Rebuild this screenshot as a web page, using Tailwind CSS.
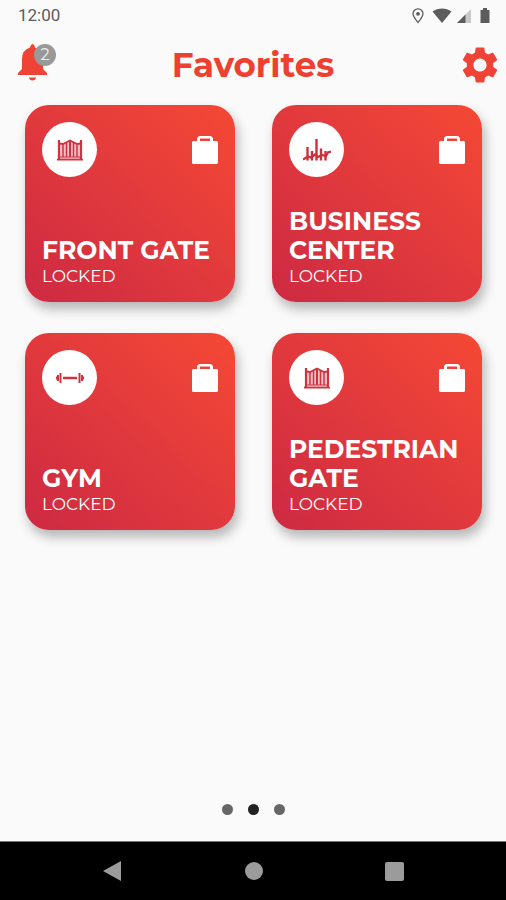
<!DOCTYPE html>
<html lang="en">

<head>
  <meta charset="UTF-8">
  <meta name="viewport" content="width=device-width, initial-scale=1.0">
  <title>Favorites</title>
  <script src="https://cdn.jsdelivr.net/npm/@tailwindcss/browser@4"></script>
</head>

<body class="min-h-screen flex flex-col bg-[#fafafa] font-[Montserrat,Inter,sans-serif]">

  <!-- Shared icons -->
  <svg class="hidden">
    <symbol id="icon-bag" viewBox="0 0 26 28">
      <path fill="currentColor" fill-rule="evenodd" d="M7 0h12l2 2v3h4l1 1v21l-1 1H1l-1-1V6l1-1h4V2zM8 2.500v2.500h10V2.500z" />
    </symbol>
    <symbol id="icon-gate" viewBox="0 0 28 24">
      <path fill="currentColor" fill-opacity="0.3" d="M3 6l4 .5 7-4 7 4 4-.5v16H3z" />
      <g fill="none" stroke="currentColor">
        <path stroke-width="2.200" d="M3 2v19M25 2v19" />
        <path stroke-width="1.800" d="M3 5.500l4 .5 7-3.500 7 3.500 4-.5" />
        <path stroke-width="1.500" d="M7 6v13M10.500 5v14M17.500 5v14M21 6v13" />
        <path stroke-width="2" d="M14 2v17" />
        <path stroke-width="1" d="M3 19h22" />
        <path stroke-width="1.800" d="M1 21.600h26" />
      </g>
    </symbol>
    <symbol id="icon-business" viewBox="0 0 28 24">
      <g fill="none" stroke="currentColor">
        <path stroke-width="2.200" d="M0 21.500l5-3 3 1 4-3 3 2.500 4-2 4 1 2-3.500 3-1" />
        <path stroke-width="2.400" d="M4.500 9v13.500M9 13v9.500M13.500 1v21.500M18 10.500v12M22.500 13v9.500" />
      </g>
    </symbol>
    <symbol id="icon-gym" viewBox="0 0 28 24">
      <path fill="currentColor" d="M0 10.500h1V9h2v6H1v-1.500H0zM3.500 7h2v10h-2zM7 10.800h14v2.400H7zM22.500 7h2v10h-2zM25 9h2v1.500h1v3h-1V15h-2z" />
    </symbol>
  </svg>

  <!-- Status bar -->
  <div class="h-8 pl-[18px] pr-4 flex items-center justify-between text-[#5c5c5c]">
    <span class="font-[Roboto,sans-serif] text-[17px]">12:00</span>
    <div class="flex items-center">
      <svg class="w-3 h-4 mr-2" viewBox="0 0 12 16">
        <path fill="none" stroke="currentColor" stroke-width="1.300" d="M6 14.500C3 10.800 1 8.500 1 5.800a5 5 0 0 1 10 0C11 8.500 9 10.800 6 14.500z" />
        <circle cx="6" cy="5.800" r="1.900" fill="currentColor" />
      </svg>
      <svg class="w-5 h-4" viewBox="0 0 20 16">
        <path fill="currentColor" d="M.500 3.500C6-.5 14-.5 19.500 3.500L10 15z" />
      </svg>
      <svg class="w-4 h-4 ml-1 mr-2" viewBox="0 0 16 16">
        <path fill="#c9c9c9" d="M15 1v14H1z" />
        <path fill="currentColor" d="M9.500 6.500V15H1z" />
      </svg>
      <svg class="w-[10px] h-4" viewBox="0 0 10 16">
        <path fill="currentColor" d="M3 0h4v2h2.500v13h-9V2H3z" />
      </svg>
    </div>
  </div>

  <!-- Header -->
  <header class="h-[66px] px-1 grid grid-cols-[1fr_auto_1fr] items-center text-[#ee4335]">
    <button type="button" aria-label="Notifications" class="relative ml-[6px] w-11 h-11 justify-self-start">
      <svg class="w-11 h-11" viewBox="0 0 44 44">
        <path fill="currentColor" d="M20.500 3q2-4 4 0l.5 1.500q8 2.500 8 11.500v10l4 4v2H8v-2l4-4V16q0-9 8-11.500zM19 34.500h7q-.5 3-3.500 3t-3.500-3z" />
      </svg>
      <span class="absolute top-[1px] right-[-2px] size-[22px] rounded-full bg-[#999999] text-[#eeeeee] text-[16px] leading-[22px] text-center">2</span>
    </button>
    <h1 class="text-[34px] leading-none font-bold text-[#ee4030]">Favorites</h1>
    <button type="button" aria-label="Settings" class="justify-self-end">
      <svg class="w-11 h-11" viewBox="0 0 24 24">
        <path fill="currentColor" d="M19.140 12.940c.04-.3.060-.61.060-.94 0-.32-.02-.64-.07-.94l2.030-1.580c.18-.14.230-.41.120-.61l-1.920-3.320c-.12-.22-.37-.29-.59-.22l-2.390.96c-.5-.38-1.030-.7-1.620-.94l-.36-2.540c-.04-.24-.24-.41-.48-.41h-3.840c-.24 0-.43.170-.47.410l-.36 2.540c-.59.240-1.130.570-1.620.940l-2.390-.96c-.22-.08-.47 0-.59.220L2.740 8.870c-.12.210-.08.470.120.610l2.030 1.580c-.05.300-.09.630-.09.940s.02.640.07.940l-2.030 1.580c-.18.140-.23.410-.12.610l1.920 3.320c.12.220.37.290.59.220l2.390-.96c.5.380 1.030.7 1.620.94l.36 2.540c.05.240.24.410.48.410h3.840c.24 0 .44-.17.470-.41l.36-2.540c.59-.24 1.130-.56 1.620-.94l2.390.96c.22.080.47 0 .59-.22l1.920-3.320c.12-.22.070-.47-.12-.61l-2.010-1.580zM12 15.600c-1.980 0-3.600-1.620-3.600-3.600s1.620-3.600 3.600-3.600 3.600 1.620 3.600 3.600-1.620 3.600-3.600 3.600z" />
      </svg>
    </button>
  </header>

  <!-- Favorite doors -->
  <main class="flex-1 pt-[7px] pl-[25px] pr-6">
    <div class="grid grid-cols-2 gap-x-[37px] gap-y-[31px]">
      <button type="button" class="min-h-[197px] p-[17px] pb-[15px] flex flex-col justify-between text-left text-white rounded-[24px] bg-linear-to-tr from-[#cd2942] to-[#f54834] shadow-[3px_7px_12px_rgba(0,0,0,0.28)]">
        <span class="w-full flex items-center justify-between">
          <span class="size-[55px] rounded-full bg-white text-[#cf3340] flex items-center justify-center">
            <svg class="w-7 h-6"><use href="#icon-gate" /></svg>
          </span>
          <svg class="w-[26px] h-7"><use href="#icon-bag" /></svg>
        </span>
        <span class="block">
          <span class="block text-[25px] leading-[29px] font-bold">FRONT GATE</span>
          <span class="block text-[17px] leading-[22px]">LOCKED</span>
        </span>
      </button>

      <button type="button" class="min-h-[197px] p-[17px] pb-[15px] flex flex-col justify-between text-left text-white rounded-[24px] bg-linear-to-tr from-[#cd2942] to-[#f54834] shadow-[3px_7px_12px_rgba(0,0,0,0.28)]">
        <span class="w-full flex items-center justify-between">
          <span class="size-[55px] rounded-full bg-white text-[#cf2f3a] flex items-center justify-center">
            <svg class="w-7 h-6"><use href="#icon-business" /></svg>
          </span>
          <svg class="w-[26px] h-7"><use href="#icon-bag" /></svg>
        </span>
        <span class="block">
          <span class="block text-[25px] leading-[29px] font-bold">BUSINESS<br>CENTER</span>
          <span class="block text-[17px] leading-[22px]">LOCKED</span>
        </span>
      </button>

      <button type="button" class="min-h-[197px] p-[17px] pb-[15px] flex flex-col justify-between text-left text-white rounded-[24px] bg-linear-to-tr from-[#cd2942] to-[#f54834] shadow-[3px_7px_12px_rgba(0,0,0,0.28)]">
        <span class="w-full flex items-center justify-between">
          <span class="size-[55px] rounded-full bg-white text-[#cf3340] flex items-center justify-center">
            <svg class="w-7 h-6"><use href="#icon-gym" /></svg>
          </span>
          <svg class="w-[26px] h-7"><use href="#icon-bag" /></svg>
        </span>
        <span class="block">
          <span class="block text-[25px] leading-[29px] font-bold">GYM</span>
          <span class="block text-[17px] leading-[22px]">LOCKED</span>
        </span>
      </button>

      <button type="button" class="min-h-[197px] p-[17px] pb-[15px] flex flex-col justify-between text-left text-white rounded-[24px] bg-linear-to-tr from-[#cd2942] to-[#f54834] shadow-[3px_7px_12px_rgba(0,0,0,0.28)]">
        <span class="w-full flex items-center justify-between">
          <span class="size-[55px] rounded-full bg-white text-[#cf3340] flex items-center justify-center">
            <svg class="w-7 h-6"><use href="#icon-gate" /></svg>
          </span>
          <svg class="w-[26px] h-7"><use href="#icon-bag" /></svg>
        </span>
        <span class="block">
          <span class="block text-[25px] leading-[29px] font-bold">PEDESTRIAN<br>GATE</span>
          <span class="block text-[17px] leading-[22px]">LOCKED</span>
        </span>
      </button>
    </div>
  </main>

  <!-- Page dots -->
  <div class="flex justify-center gap-[15px] pb-[26px]">
    <button type="button" aria-label="Page 1" class="size-[11px] rounded-full bg-[#666666]"></button>
    <button type="button" aria-label="Page 2" class="size-[11px] rounded-full bg-[#222222]"></button>
    <button type="button" aria-label="Page 3" class="size-[11px] rounded-full bg-[#666666]"></button>
  </div>

  <!-- Android navigation -->
  <nav class="h-[59px] px-[102px] flex items-center justify-between bg-black border-t border-[#777777] text-[#9b9b9b]">
    <button type="button" aria-label="Back">
      <svg class="size-5" viewBox="0 0 20 20">
        <path fill="currentColor" d="M1 10L19 0v20z" />
      </svg>
    </button>
    <button type="button" aria-label="Home" class="size-[18px] rounded-full bg-[#9b9b9b]"></button>
    <button type="button" aria-label="Recent apps" class="size-[19px] rounded-xs bg-[#9b9b9b]"></button>
  </nav>

</body>

</html>
